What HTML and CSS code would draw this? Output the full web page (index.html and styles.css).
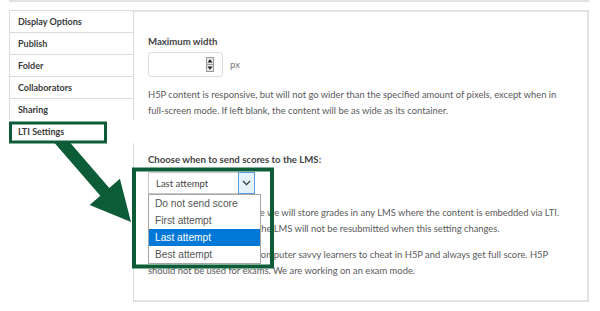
FILE: index.html
```html
<!DOCTYPE html>
<html>
<head>
<meta charset="utf-8">
<link rel="stylesheet" href="styles.css">
</head>
<body>
<div class="page">
  <div class="topline"></div>
  <div class="main">
    <nav class="tabs">
      <div class="tab">Display Options</div>
      <div class="tab">Publish</div>
      <div class="tab">Folder</div>
      <div class="tab">Collaborators</div>
      <div class="tab">Sharing</div>
      <div class="tab active">LTI Settings</div>
    </nav>
    <section class="panel">
      <div class="label">Maximum width</div>
      <div class="width-row">
        <div class="num-input">
          <svg class="spin" width="8" height="15" viewBox="0 0 8 15"><rect x="0.5" y="0.5" width="7" height="14" fill="#e6e6e6" stroke="#9a9a9a"/><line x1="0.5" y1="7.5" x2="7.5" y2="7.5" stroke="#9a9a9a"/><path d="M4 2.3 L6.6 5.6 H1.4Z" fill="#222"/><path d="M4 12.7 L6.6 9.4 H1.4Z" fill="#222"/></svg>
        </div>
        <span class="unit">px</span>
      </div>
      <p class="desc">H5P content is responsive, but will not go wider than the specified amount of pixels, except when in<br>full-screen mode. If left blank, the content will be as wide as its container.</p>
      <div class="label label-lms">Choose when to send scores to the LMS:</div>
      <div class="select-wrap">
        <div class="select">
          <span class="select-text">Last attempt</span>
          <span class="select-btn"><svg width="9" height="6" viewBox="0 0 9 6"><path d="M1 1 L4.5 4.6 L8 1" fill="none" stroke="#333" stroke-width="1.2"/></svg></span>
        </div>
        <ul class="options">
          <li>Do not send score</li>
          <li>First attempt</li>
          <li class="selected">Last attempt</li>
          <li>Best attempt</li>
        </ul>
      </div>
      <p class="desc desc-2">Please note: if enabled there we will store grades in any LMS where the content is embedded via LTI.<br>Any scores already sent to the LMS will not be resubmitted when this setting changes.</p>
      <p class="desc desc-3">Note that it is possible for computer savvy learners to cheat in H5P and always get full score. H5P<br>should not be used for exams. We are working on an exam mode.</p>
    </section>
  </div>
  <svg class="annot" width="600" height="311" viewBox="0 0 600 311">
    <rect x="10.5" y="123" width="95" height="19" fill="none" stroke="#0b5c37" stroke-width="3"/>
    <rect x="134" y="169.5" width="138" height="97" fill="none" stroke="#0b5c37" stroke-width="4"/>
    <polygon points="53.7,142 69.5,142 109.3,187.9 119.9,178.7 131,222 89.7,204.9 100.3,195.7" fill="#0b5c37"/>
  </svg>
</div>
</body>
</html>
```
FILE: styles.css
```css
* { box-sizing: border-box; }
html, body { margin: 0; padding: 0; background: #fff; }
body {
  width: 600px;
  height: 311px;
  overflow: hidden;
  font-family: Lato, "Open Sans", sans-serif;
  color: #555;
}
.page {
  position: relative;
  width: 600px;
  height: 311px;
  padding: 0 11px 0 9px;
}
.topline { border-top: 2px solid #e2e2e2; }
.main {
  display: flex;
  margin-top: 8px;
}
.tabs {
  width: 124px;
  flex: none;
  display: flex;
  flex-direction: column;
}
.tab {
  height: 23px;
  margin-top: -1px;
  border: 1px solid #dcdcdc;
  border-right: none;
  padding-left: 8px;
  display: flex;
  align-items: center;
  font-weight: 700;
  font-size: 9px;
  color: #3a3a3a;
  background: #fff;
}
.tab:first-child { margin-top: 0; }
.tab.active {
  border-color: transparent;
  margin-right: -1px;
  position: relative;
  z-index: 1;
}
.panel {
  flex: 1;
  height: 292px;
  border: 2px solid #e2e2e2;
  border-left: 1px solid #dcdcdc;
  padding: 24px 10px 0 14px;
}
.label {
  font-weight: 700;
  font-size: 9.6px;
  line-height: 11px;
  color: #444;
}
.width-row {
  display: flex;
  align-items: center;
  gap: 7px;
  margin-top: 5px;
}
.num-input {
  width: 75px;
  height: 25px;
  border: 1px solid #dcdcdc;
  border-radius: 3px;
  display: flex;
  justify-content: flex-end;
  align-items: center;
  padding-right: 8px;
}
.spin { display: block; }
.unit { font-size: 9.5px; color: #777; }
.desc {
  margin: 10px 0 0;
  font-size: 9.4px;
  line-height: 16px;
  color: #5a5a5a;
  white-space: nowrap;
}
.label-lms { margin-top: 35px; }
.select-wrap {
  position: relative;
  margin-top: 7px;
  width: 107px;
  height: 22px;
}
.select {
  display: flex;
  height: 22px;
}
.select-text {
  flex: 1;
  border: 1px solid #c8c8c8;
  border-right: none;
  padding-left: 7px;
  display: flex;
  align-items: center;
  font-size: 9.5px;
  color: #444;
}
.select-btn {
  width: 17px;
  border: 1px solid #5aa0e0;
  background: #e5f1fb;
  display: flex;
  align-items: center;
  justify-content: center;
}
.select-btn svg { display: block; }
.options {
  position: absolute;
  top: 22px;
  left: 0;
  width: 113px;
  margin: 0;
  padding: 0;
  list-style: none;
  border: 1px solid #a6a6a6;
  background: #fff;
  z-index: 2;
}
.options li {
  height: 17px;
  line-height: 17px;
  padding-left: 6px;
  font-family: "Liberation Sans", Arial, sans-serif;
  font-size: 10.2px;
  color: #555;
}
.options li.selected {
  background: #0078d7;
  color: #fff;
}
.desc-2 { margin-top: 11px; }
.desc-3 { margin-top: 10px; }
.annot {
  position: absolute;
  top: 0;
  left: 0;
  z-index: 5;
  pointer-events: none;
}
```
